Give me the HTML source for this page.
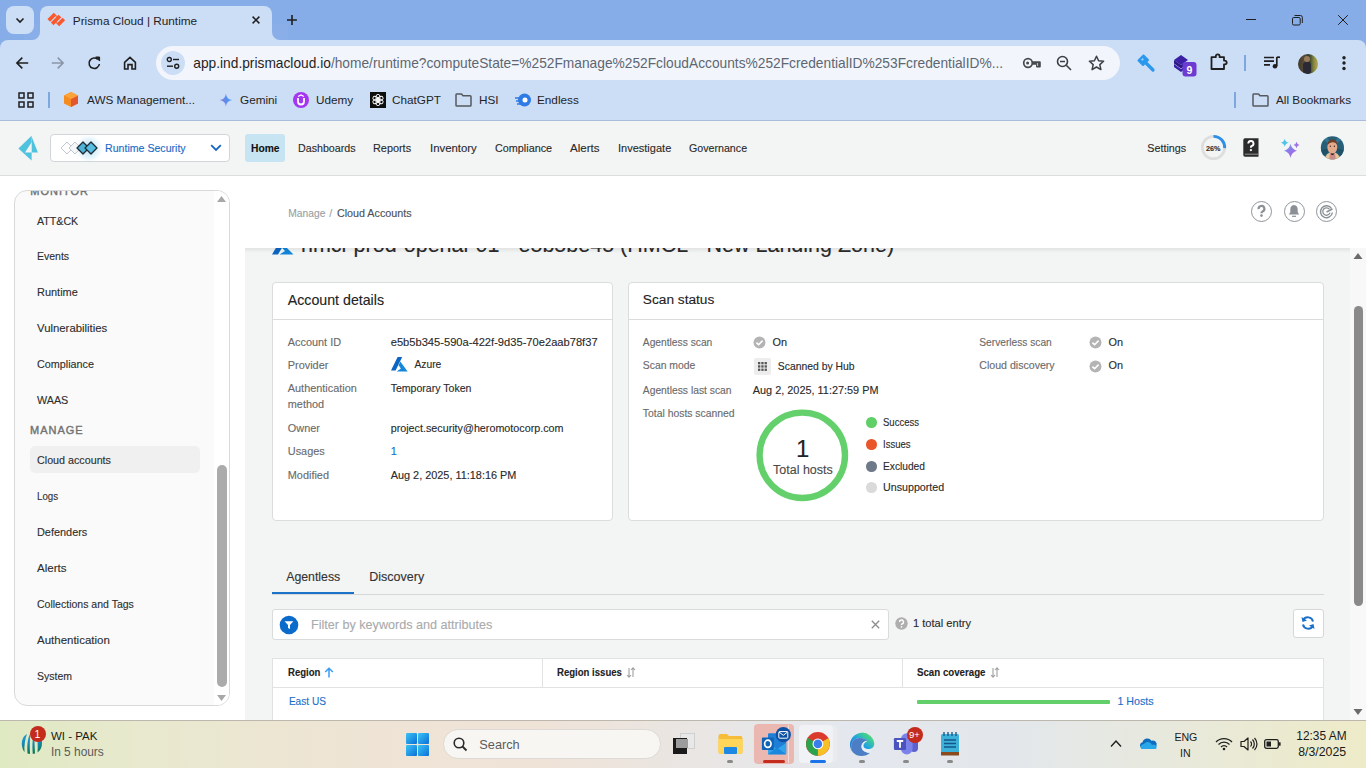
<!DOCTYPE html>
<html><head><meta charset="utf-8">
<style>
*{box-sizing:border-box;margin:0;padding:0}
html,body{width:1366px;height:768px;overflow:hidden}
body{position:relative;background:#fff;font-family:"Liberation Sans",sans-serif;color:#333}
.a{position:absolute}
.t{position:absolute;white-space:nowrap;line-height:1}
.app .t{-webkit-text-stroke:0.12px currentColor}
svg{position:absolute;overflow:visible}
#tabstrip{left:0;top:0;width:1366px;height:48px;background:#87ADE8}
#toolbar{left:0;top:40px;width:1366px;height:80px;background:#CCDDF6}
#sep120{left:0;top:120px;width:1366px;height:1px;background:#A9BCD9}
.ct{font-size:11.75px;color:#1F1F1F}
</style></head><body>
<!-- ============ CHROME ============ -->
<div id="tabstrip" class="a"></div>
<!-- active tab -->
<div class="a" style="left:40px;top:6px;width:232px;height:40px;border-radius:8px 8px 0 0;background:#CCDDF6"></div>
<div class="a" style="left:32px;top:32px;width:8px;height:8px;background:#CCDDF6"></div>
<div class="a" style="left:24px;top:24px;width:16px;height:16px;border-radius:0 0 8px 0;background:#89AEE8"></div>
<div class="a" style="left:272px;top:32px;width:8px;height:8px;background:#CCDDF6"></div>
<div class="a" style="left:272px;top:24px;width:16px;height:16px;border-radius:0 0 0 8px;background:#89AEE8"></div>
<div class="a" style="left:6px;top:6px;width:28px;height:28px;border-radius:8px;background:#CCDDF6"></div>
<svg style="left:14px;top:14px" width="12" height="12"><path d="M2.5 4.5 L6 8 L9.5 4.5" fill="none" stroke="#1F1F1F" stroke-width="1.6"/></svg>
<svg style="left:45px;top:10px" width="22" height="19" viewBox="45 10 22 19"><g transform="translate(56 20) rotate(-45)" fill="#FA582D"><rect x="-5.4" y="-6.7" width="9.0" height="3.7"/><rect x="2.4" y="-3.2" width="1.2" height="1.4"/><rect x="-5.4" y="-1.85" width="11" height="3.7"/><rect x="-2.2" y="1.8" width="1.2" height="1.4"/><rect x="-2.2" y="3.0" width="8.4" height="3.7"/></g></svg>
<div class="t ct" style="left:72.8px;top:16px;font-size:11.8px">Prisma Cloud | Runtime</div>
<svg style="left:251px;top:15px" width="10" height="10"><path d="M1.6 1.6 L8.4 8.4 M8.4 1.6 L1.6 8.4" stroke="#1F1F1F" stroke-width="1.5"/></svg>
<svg style="left:286px;top:14px" width="12" height="12"><path d="M6 1 V10.9 M1 6 H10.9" stroke="#1F1F1F" stroke-width="1.6"/></svg>
<!-- window controls -->
<div class="a" style="left:1246px;top:19px;width:10px;height:1px;background:#1F1F1F"></div>
<svg style="left:1290px;top:14px" width="14" height="13" viewBox="1290 14 14 13"><rect x="1292.5" y="17.5" width="7.7" height="7.5" rx="1.3" fill="none" stroke="#1F1F1F" stroke-width="1"/><path d="M1294.5 15.5 H1300.5 Q1302.3 15.5 1302.3 17.3 V23" fill="none" stroke="#1F1F1F" stroke-width="1"/></svg>
<svg style="left:1337px;top:14px" width="12" height="12" viewBox="1337 14 12 12"><path d="M1338.2 15.2 L1347.8 24.8 M1347.8 15.2 L1338.2 24.8" stroke="#1F1F1F" stroke-width="1"/></svg>

<div id="toolbar" class="a" style="border-radius:8px 8px 0 0"></div>
<!-- nav buttons -->
<svg style="left:14px;top:55px" width="16" height="16"><path d="M14.2 8 H3 M8.3 2.6 L2.9 8 L8.3 13.4" fill="none" stroke="#1F1F1F" stroke-width="1.6"/></svg>
<svg style="left:50px;top:55px" width="16" height="16"><path d="M1.8 8 H13 M7.7 2.6 L13.1 8 L7.7 13.4" fill="none" stroke="#8A96A8" stroke-width="1.6"/></svg>
<svg style="left:87px;top:56px" width="15" height="15"><path d="M12.4 8 A5.2 5.2 0 1 1 10.8 3.4" fill="none" stroke="#1F1F1F" stroke-width="1.6"/><path d="M8.6 1 H12.6 V5 Z" fill="#1F1F1F" stroke="#1F1F1F" stroke-width="1"/></svg>
<svg style="left:122px;top:55px" width="16" height="16"><path d="M2.6 7.4 L8 2.3 L13.4 7.4 V14 H10 V9.6 H6 V14 H2.6 Z" fill="none" stroke="#1F1F1F" stroke-width="1.6" stroke-linejoin="miter"/></svg>
<!-- omnibox -->
<div class="a" style="left:156px;top:46px;width:964px;height:34px;border-radius:17px;background:#F2F6FC"></div>
<div class="a" style="left:161px;top:51px;width:24px;height:24px;border-radius:12px;background:#CCDDF6"></div>
<svg style="left:166px;top:56px" width="14" height="14"><circle cx="3.3" cy="3.5" r="2" fill="none" stroke="#1F1F1F" stroke-width="1.4"/><path d="M7 3.5 H13" stroke="#1F1F1F" stroke-width="1.4"/><circle cx="10.7" cy="10.2" r="2" fill="none" stroke="#1F1F1F" stroke-width="1.4"/><path d="M1 10.2 H7" stroke="#1F1F1F" stroke-width="1.4"/></svg>
<div class="t" style="left:193.3px;top:57px;font-size:13.76px;color:#1F1F1F">app.ind.prismacloud.io<span style="color:#5E6672">/home/runtime?computeState=%252Fmanage%252FcloudAccounts%252FcredentialID%253FcredentialID%...</span></div>
<svg style="left:1022px;top:56px" width="20" height="14" viewBox="1022 56 20 14"><circle cx="1028" cy="63" r="4.3" fill="none" stroke="#474A4D" stroke-width="1.7"/><circle cx="1027.6" cy="63" r="1.5" fill="#474A4D"/><path d="M1032.2 61.2 H1039.8 Q1040.8 61.2 1040.8 62.2 V66.5 Q1040.8 67.5 1039.8 67.5 H1037 Q1036 67.5 1036 66.5 V64.8 H1032.2 Z" fill="#474A4D"/><path d="M1037.5 63 V66" stroke="#B8BABD" stroke-width="1.2"/></svg>
<svg style="left:1056px;top:55px" width="16" height="16"><circle cx="6.5" cy="6.5" r="5" fill="none" stroke="#3C4043" stroke-width="1.6"/><path d="M10.3 10.3 L15 15 M4 6.5 H9" stroke="#3C4043" stroke-width="1.6"/></svg>
<svg style="left:1088px;top:55px" width="17" height="16"><path d="M8.5 1.2 L10.6 5.8 L15.6 6.3 L11.8 9.6 L12.9 14.6 L8.5 12 L4.1 14.6 L5.2 9.6 L1.4 6.3 L6.4 5.8 Z" fill="none" stroke="#3C4043" stroke-width="1.5" stroke-linejoin="round"/></svg>
<!-- extensions -->
<svg style="left:1137px;top:54px" width="18" height="18" viewBox="0 0 18 18"><path d="M1.5 6.5 L6.5 1.5 L11 6 L6 11 Z" fill="#2B98EE" stroke="#2B98EE" stroke-width="2" stroke-linejoin="round"/><path d="M8.5 8.5 L16 16" stroke="#2B98EE" stroke-width="3.2" stroke-linecap="round"/><path d="M4.6 6.3 L6.3 4.6" stroke="#9ED3FA" stroke-width="1.6"/></svg>
<svg style="left:1173px;top:54px" width="25" height="24" viewBox="0 0 25 24"><path d="M1 6 L8 1 L15 6 L8 11 Z" fill="#3B20A6"/><path d="M1 9.5 L8 14.5 L10 13.1 V9.5 L8 11 L1 6 Z" fill="#2C168A"/><path d="M1 10 V13 L8 18 L10 16.6 V13.5 L8 15 Z" fill="#3B20A6"/><rect x="9.5" y="8" width="14" height="14.5" rx="3" fill="#6B3BD2"/><text x="16.5" y="19.6" font-family="Liberation Sans" font-weight="bold" font-size="10.5" fill="#fff" text-anchor="middle">9</text></svg>
<svg style="left:1210px;top:53px" width="19" height="18" viewBox="0 0 19 18"><path d="M1.5 4.2 H5.8 V3.3 A1.9 1.9 0 0 1 9.6 3.3 V4.2 H14 V7.6 H14.8 A1.9 1.9 0 0 1 14.8 11.4 H14 V16 H1.5 Z" fill="none" stroke="#1F1F1F" stroke-width="1.8" stroke-linejoin="round"/></svg>
<div class="a" style="left:1244px;top:55px;width:2px;height:16px;background:#7FA7DF"></div>
<svg style="left:1263px;top:56px" width="18" height="13" viewBox="0 0 18 13"><path d="M1 1.5 H11 M1 5.2 H11 M1 8.9 H7" stroke="#1F1F1F" stroke-width="1.7"/><path d="M13.8 1 V10" stroke="#1F1F1F" stroke-width="1.7"/><circle cx="12" cy="10.2" r="2.3" fill="#1F1F1F"/><path d="M13.8 1.2 H17" stroke="#1F1F1F" stroke-width="1.7"/></svg>
<div class="a" style="left:1298px;top:53.5px;width:20px;height:20px;border-radius:10px;overflow:hidden;background:linear-gradient(90deg,#3B3A2A 0%,#5A4B3A 30%,#2F3A30 55%,#8A8A40 80%,#B8A850 100%)"><div class="a" style="left:6px;top:2px;width:6px;height:6px;border-radius:50%;background:#9B7A5A"></div><div class="a" style="left:5px;top:8px;width:8px;height:12px;border-radius:3px;background:#2A2A35"></div></div>
<svg style="left:1341px;top:55px" width="6" height="16"><circle cx="3" cy="2.7" r="1.7" fill="#1F1F1F"/><circle cx="3" cy="8" r="1.7" fill="#1F1F1F"/><circle cx="3" cy="13.5" r="1.7" fill="#1F1F1F"/></svg>

<!-- bookmarks -->
<svg style="left:18px;top:92px" width="16" height="16"><g fill="none" stroke="#1F1F1F" stroke-width="1.5"><rect x="1" y="1" width="5" height="5"/><rect x="10" y="1" width="5" height="5"/><rect x="1" y="10" width="5" height="5"/><rect x="10" y="10" width="5" height="5"/></g></svg>
<div class="a" style="left:48px;top:92px;width:2px;height:16px;background:#7FA7DF"></div>
<svg style="left:63px;top:91px" width="16" height="17"><path d="M8 1 L15 4.5 V12.5 L8 16 L1 12.5 V4.5 Z" fill="#F68B1F"/><path d="M8 8 L15 4.5 V12.5 L8 16 Z" fill="#E4572E"/><path d="M1 4.5 L8 8 L15 4.5 L8 1 Z" fill="#FBA33A"/></svg>
<div class="t ct" style="left:87px;top:94px">AWS Management...</div>
<svg style="left:219px;top:93px" width="14" height="14" viewBox="219 93 14 14"><defs><linearGradient id="gem" x1="0" y1="0.6" x2="1" y2="0.4"><stop offset="0" stop-color="#9B72CB"/><stop offset="0.5" stop-color="#5B8DEF"/><stop offset="1" stop-color="#3FA1EE"/></linearGradient></defs><path d="M225.9 93.8 Q226.6 99.4 232.2 100.1 Q226.6 100.8 225.9 106.4 Q225.2 100.8 219.6 100.1 Q225.2 99.4 225.9 93.8 Z" fill="url(#gem)"/></svg>
<div class="t ct" style="left:240px;top:94px">Gemini</div>
<div class="a" style="left:293px;top:92px;width:16px;height:16px;border-radius:8px;background:#A435F0"></div>
<svg style="left:293px;top:92px" width="16" height="16"><path d="M5 6 V9.5 A3 3 0 0 0 11 9.5 V6" fill="none" stroke="#fff" stroke-width="1.8"/><path d="M5 4.5 L8 3 L11 4.5" fill="none" stroke="#fff" stroke-width="1.3"/></svg>
<div class="t ct" style="left:316px;top:94px">Udemy</div>
<div class="a" style="left:370px;top:92px;width:16px;height:16px;background:#0D0D0D"></div><svg style="left:370px;top:92px" width="16" height="16" viewBox="-8 -8 16 16"><rect x="-1.9" y="-5.6" width="3.8" height="6.6" rx="1.9" transform="rotate(0)" fill="none" stroke="#fff" stroke-width="0.9"/><rect x="-1.9" y="-5.6" width="3.8" height="6.6" rx="1.9" transform="rotate(60)" fill="none" stroke="#fff" stroke-width="0.9"/><rect x="-1.9" y="-5.6" width="3.8" height="6.6" rx="1.9" transform="rotate(120)" fill="none" stroke="#fff" stroke-width="0.9"/><rect x="-1.9" y="-5.6" width="3.8" height="6.6" rx="1.9" transform="rotate(180)" fill="none" stroke="#fff" stroke-width="0.9"/><rect x="-1.9" y="-5.6" width="3.8" height="6.6" rx="1.9" transform="rotate(240)" fill="none" stroke="#fff" stroke-width="0.9"/><rect x="-1.9" y="-5.6" width="3.8" height="6.6" rx="1.9" transform="rotate(300)" fill="none" stroke="#fff" stroke-width="0.9"/></svg>
<div class="t ct" style="left:392px;top:94px">ChatGPT</div>
<svg style="left:455px;top:92px" width="17" height="15"><path d="M1.5 2 Q1 2 1 2.8 V13.2 Q1 14 1.8 14 H15.2 Q16 14 16 13.2 V4.6 Q16 3.8 15.2 3.8 H8 L6.5 2 Z" fill="none" stroke="#55595E" stroke-width="1.5" stroke-linejoin="round"/></svg>
<div class="t ct" style="left:479px;top:94px">HSI</div>
<svg style="left:514px;top:92px" width="18" height="16"><circle cx="10.5" cy="8" r="6.5" fill="#2E7BE6"/><path d="M1 6 H7 M2 9 H6 M3 12 H7" stroke="#2E7BE6" stroke-width="1.3"/><circle cx="11" cy="8" r="2.5" fill="#fff"/></svg>
<div class="t ct" style="left:537px;top:94px">Endless</div>
<div class="a" style="left:1234px;top:92px;width:2px;height:16px;background:#7FA7DF"></div>
<svg style="left:1252px;top:92px" width="17" height="15"><path d="M1.5 2 Q1 2 1 2.8 V13.2 Q1 14 1.8 14 H15.2 Q16 14 16 13.2 V4.6 Q16 3.8 15.2 3.8 H8 L6.5 2 Z" fill="none" stroke="#55595E" stroke-width="1.5" stroke-linejoin="round"/></svg>
<div class="t ct" style="left:1276px;top:94px">All Bookmarks</div>
<div id="sep120" class="a"></div>

<div class="app">
<div class="a" style="left:0px;top:121px;width:1366px;height:55px;background:#F3F4F4;border-bottom:1px solid #DCDEDE"></div>
<svg style="left:18px;top:135px" width="21" height="26" viewBox="18 135 21 26"><path d="M18.4 148.5 L31.6 135.7 L31.6 160.6 Z" fill="#4FC3DE"/><path d="M31.6 136.5 L37.9 152.5 L31.6 152.5 Z" fill="#4FC3DE"/><path d="M25 152.5 L31.6 142.3 L31.6 152.5 Z" fill="#F3F4F4"/></svg>
<div class="a" style="left:50px;top:134px;width:180px;height:28px;background:#fff;border:1px solid #D3D6D8;border-radius:4px"></div>
<div class="a" style="left:75px;top:135px;width:28px;height:27px;background:radial-gradient(circle, rgba(110,195,235,0.5) 0%, rgba(120,200,235,0.2) 45%, rgba(255,255,255,0) 70%);"></div>
<svg style="left:60px;top:141px" width="40" height="14" viewBox="60 141 40 14"><path d="M67 142 L73 148 L67 154 L61 148 Z" fill="none" stroke="#C3C8D0" stroke-width="1"/><path d="M75 142 L81 148 L75 154 L69 148 Z" fill="#F4F6F8" stroke="#C3C8D0" stroke-width="1"/><path d="M83 142 L89 148 L83 154 L77 148 Z" fill="#4DB3D9" stroke="#1E2A33" stroke-width="1.3" stroke-linejoin="round"/><path d="M91 142 L97 148 L91 154 L85 148 Z" fill="#56BDE3" stroke="#1E2A33" stroke-width="1.3" stroke-linejoin="round"/></svg>
<div class="t" style="left:105px;top:143px;font-size:10.6px;color:#1A6BC7">Runtime Security</div>
<svg style="left:210px;top:144px" width="12" height="8"><path d="M1.2 1.2 L6 6 L10.8 1.2" fill="none" stroke="#1565C0" stroke-width="1.8"/></svg>
<div class="a" style="left:245px;top:134px;width:40px;height:28px;background:#C7E4F2;border-radius:3px"></div>
<div class="t" style="left:250.5px;top:143px;font-size:11.2px;color:#111;transform:scaleX(0.9170);transform-origin:0 0;font-weight:700">Home</div>
<div class="t" style="left:297.5px;top:143px;font-size:11px;color:#2A2A2A;transform:scaleX(0.9706);transform-origin:0 0">Dashboards</div>
<div class="t" style="left:373.2px;top:143px;font-size:11px;color:#2A2A2A;transform:scaleX(0.9888);transform-origin:0 0">Reports</div>
<div class="t" style="left:429.8px;top:143px;font-size:11px;color:#2A2A2A;transform:scaleX(1.0335);transform-origin:0 0">Inventory</div>
<div class="t" style="left:494.8px;top:143px;font-size:11px;color:#2A2A2A;transform:scaleX(0.9829);transform-origin:0 0">Compliance</div>
<div class="t" style="left:569.9px;top:143px;font-size:11px;color:#2A2A2A;transform:scaleX(1.0489);transform-origin:0 0">Alerts</div>
<div class="t" style="left:617.5px;top:143px;font-size:11px;color:#2A2A2A;transform:scaleX(1.0009);transform-origin:0 0">Investigate</div>
<div class="t" style="left:688.9px;top:143px;font-size:11px;color:#2A2A2A;transform:scaleX(0.9688);transform-origin:0 0">Governance</div>
<div class="t" style="left:1147.3px;top:143px;font-size:10.75px;color:#2A2A2A">Settings</div>
<svg style="left:1200px;top:134px" width="27" height="27" viewBox="0 0 27 27"><circle cx="13.5" cy="13.5" r="11.2" fill="none" stroke="#DEDEDE" stroke-width="2.8"/><path d="M13.5 2.3 A11.2 11.2 0 0 1 24.68 14.2" fill="none" stroke="#2C8FE8" stroke-width="2.8"/></svg>
<div class="t" style="left:1206.2px;top:145px;font-size:7.4px;color:#333;transform:scaleX(0.9799);transform-origin:0 0;font-weight:700">26%</div>
<svg style="left:1243px;top:138px" width="16" height="20" viewBox="0 0 16 20"><path d="M0.3 2 Q0.3 0.3 2 0.3 H15.5 V18.8 H2 Q0.3 18.8 0.3 17 Z" fill="#2B2B2B"/><path d="M1.8 16.2 H15" stroke="#A0A0A0" stroke-width="0.9"/><path d="M5.3 5.6 A2.6 2.6 0 1 1 8.4 8.1 Q7.9 8.5 7.9 9.8" fill="none" stroke="#fff" stroke-width="1.9"/><circle cx="7.9" cy="12.1" r="1.15" fill="#fff"/></svg>
<svg style="left:1278px;top:136px" width="24" height="24" viewBox="1278 136 24 24"><defs><linearGradient id="sg" x1="0" y1="0" x2="0.6" y2="1"><stop offset="0" stop-color="#6FB6F2"/><stop offset="0.5" stop-color="#8A7BEA"/><stop offset="1" stop-color="#A867DE"/></linearGradient></defs><path d="M1290.5 143.7 Q1291.652 149.44 1296.9 150.7 Q1291.652 151.95999999999998 1290.5 157.7 Q1289.348 151.95999999999998 1284.1 150.7 Q1289.348 149.44 1290.5 143.7 Z" fill="url(#sg)"/><path d="M1284.7 138.7 Q1285.42 141.98 1288.7 142.7 Q1285.42 143.42 1284.7 146.7 Q1283.98 143.42 1280.7 142.7 Q1283.98 141.98 1284.7 138.7 Z" fill="#4EC3EC"/><path d="M1296.5 141.7 Q1297.04 144.406 1299.5 145 Q1297.04 145.594 1296.5 148.3 Q1295.96 145.594 1293.5 145 Q1295.96 144.406 1296.5 141.7 Z" fill="#A070E6"/></svg>
<svg style="left:1320px;top:135px" width="25" height="26" viewBox="1320 135 25 26"><defs><clipPath id="avc"><circle cx="1332.4" cy="147.8" r="11.6"/></clipPath></defs><g clip-path="url(#avc)"><rect x="1320" y="135" width="25" height="26" fill="#255F78"/><path d="M1332.4 147.8 L1322 138 L1327 136 Z M1332.4 147.8 L1343 138 L1338 136 Z" fill="#3A86A6" opacity="0.6"/><path d="M1320 150 L1332.4 147.8 L1322 158 Z M1345 150 L1332.4 147.8 L1343 158 Z" fill="#1B4A60" opacity="0.7"/><path d="M1324.5 161 Q1325 152.5 1332.4 152 Q1339.8 152.5 1340.3 161 Z" fill="#E8C49A"/><path d="M1329 161 L1330 153 H1335 L1336 161 Z" fill="#C98A86"/><ellipse cx="1332.3" cy="147.2" rx="4.9" ry="6.6" fill="#E2A98A"/><path d="M1327.5 145 Q1327.5 139.5 1332.5 139.5 Q1337.3 139.5 1337.2 144.5 Q1335 141.8 1332 142.3 Q1329 142.8 1327.5 145 Z" fill="#6B3F2A"/><path d="M1330.5 153.5 Q1332.4 156.5 1334.3 153.5 Z" fill="#1E1A1A"/><circle cx="1330.3" cy="146.3" r="0.7" fill="#4A2A25"/><circle cx="1334.4" cy="146.3" r="0.7" fill="#4A2A25"/></g></svg>
<div class="a" style="left:14px;top:190px;width:216px;height:516px;background:#FAFAFA;border:1px solid #D9D9D9;border-radius:13px;overflow:hidden"></div>
<div class="a" style="left:214px;top:191px;width:15px;height:514px;background:#FFFFFF;border-radius:0 12px 12px 0"></div>
<div class="a" style="left:15px;top:191px;width:199px;height:514px;overflow:hidden">
<div class="t" style="left:15.3px;top:-5px;font-size:11px;color:#727272;letter-spacing:1.0px;-webkit-text-stroke:0.4px #727272">MONITOR</div>
<div class="a" style="left:15px;top:255px;width:170px;height:27px;background:#F0F0F0;border-radius:5px"></div>
<div class="t" style="left:22px;top:25px;font-size:11px;color:#2E2E2E;transform:scaleX(0.9673);transform-origin:0 0">ATT&amp;CK</div>
<div class="t" style="left:22px;top:60px;font-size:11px;color:#2E2E2E;transform:scaleX(0.9538);transform-origin:0 0">Events</div>
<div class="t" style="left:22px;top:96px;font-size:11px;color:#2E2E2E;transform:scaleX(0.9959);transform-origin:0 0">Runtime</div>
<div class="t" style="left:22px;top:132px;font-size:11px;color:#2E2E2E;transform:scaleX(1.0324);transform-origin:0 0">Vulnerabilities</div>
<div class="t" style="left:22px;top:168px;font-size:11px;color:#2E2E2E;transform:scaleX(0.9795);transform-origin:0 0">Compliance</div>
<div class="t" style="left:22px;top:204px;font-size:11px;color:#2E2E2E;transform:scaleX(0.9781);transform-origin:0 0">WAAS</div>
<div class="t" style="left:15px;top:234px;font-size:11px;color:#727272;letter-spacing:1.0px;-webkit-text-stroke:0.4px #727272">MANAGE</div>
<div class="t" style="left:22px;top:264px;font-size:11px;color:#2E2E2E;transform:scaleX(0.9753);transform-origin:0 0">Cloud accounts</div>
<div class="t" style="left:22px;top:300px;font-size:11px;color:#2E2E2E;transform:scaleX(0.8838);transform-origin:0 0">Logs</div>
<div class="t" style="left:22px;top:336px;font-size:11px;color:#2E2E2E;transform:scaleX(0.9905);transform-origin:0 0">Defenders</div>
<div class="t" style="left:22px;top:372px;font-size:11px;color:#2E2E2E;transform:scaleX(1.0489);transform-origin:0 0">Alerts</div>
<div class="t" style="left:22px;top:408px;font-size:11px;color:#2E2E2E;transform:scaleX(0.9560);transform-origin:0 0">Collections and Tags</div>
<div class="t" style="left:22px;top:444px;font-size:11px;color:#2E2E2E;transform:scaleX(1.0447);transform-origin:0 0">Authentication</div>
<div class="t" style="left:22px;top:480px;font-size:11px;color:#2E2E2E;transform:scaleX(0.9540);transform-origin:0 0">System</div>
</div>
<svg style="left:216px;top:195px" width="12" height="8"><path d="M1 7 L5.5 1 L10 7 Z" fill="#A8A8A8"/></svg>
<svg style="left:216px;top:694px" width="12" height="8"><path d="M1 1 L5.5 7 L10 1 Z" fill="#A8A8A8"/></svg>
<div class="a" style="left:217px;top:465px;width:10px;height:222px;background:#ABABAB;border-radius:5px"></div>
<div class="a" style="left:245px;top:248px;width:1105px;height:472px;background:#F3F4F4;"></div>
<div class="a" style="left:245px;top:248px;width:1105px;height:20px;overflow:hidden">
<div class="t" style="left:56px;top:-13px;font-size:21.5px;color:#2A2A2A">hmcl-prod-openai-01 - e5b5be45 (HMCL - New Landing Zone)</div>
<svg style="left:27px;top:-8px" width="22" height="16" viewBox="0 0 22 16"><path d="M8.5 0 L14.5 0 L6 14.5 L0 14.5 Z" fill="#0A66C2"/><path d="M12 5 L21.5 14.5 L7.5 14.5 L13 11 L10 7.8 Z" fill="#1185D8"/></svg>
</div>
<div class="a" style="left:245px;top:248px;width:1105px;height:5px;background:linear-gradient(rgba(0,0,0,0.07),rgba(0,0,0,0));"></div>
<div class="t" style="left:288.3px;top:209px;font-size:10.25px;color:#9A9FA4">Manage</div>
<div class="t" style="left:329.3px;top:208px;font-size:10.75px;color:#9A9FA4">/</div>
<div class="t" style="left:336.9px;top:208px;font-size:10.75px;color:#4A4F55">Cloud Accounts</div>
<div class="a" style="left:1251.0px;top:200.5px;width:21px;height:21px;background:transparent;border:1.2px solid #8F959A;border-radius:50%"></div>
<div class="a" style="left:1283.5px;top:200.5px;width:21px;height:21px;background:transparent;border:1.2px solid #8F959A;border-radius:50%"></div>
<div class="a" style="left:1316.0px;top:200.5px;width:21px;height:21px;background:transparent;border:1.2px solid #8F959A;border-radius:50%"></div>
<svg style="left:1256px;top:205px" width="11" height="12" viewBox="0 0 11 12"><path d="M2.6 4.2 A2.9 2.9 0 1 1 6.4 6.6 Q5.5 7.1 5.5 8.3" fill="none" stroke="#8A9096" stroke-width="2.2"/><circle cx="5.5" cy="10.6" r="1.3" fill="#8A9096"/></svg>
<svg style="left:1288px;top:204px" width="12" height="14" viewBox="0 0 12 14"><path d="M6 1 C3.3 1 2.3 3.2 2.3 5.5 V8.3 L0.8 10.6 H11.2 L9.7 8.3 V5.5 C9.7 3.2 8.7 1 6 1 Z" fill="#8A9096"/><path d="M4 12.3 H8" stroke="#8A9096" stroke-width="1.2"/></svg>
<svg style="left:1319px;top:203.5px" width="15" height="15" viewBox="0 0 15 15"><path d="M12.6 4.6 A6 6 0 1 0 13.4 8.5" fill="none" stroke="#8A9096" stroke-width="1.4"/><path d="M10.5 5.4 A3.7 3.7 0 1 0 11 8.6" fill="none" stroke="#8A9096" stroke-width="1.3"/><path d="M7.5 8 L13.5 5" stroke="#8A9096" stroke-width="1.4"/></svg>
<div class="a" style="left:1350px;top:248px;width:16px;height:472px;background:#F8F8F8;"></div>
<svg style="left:1353px;top:252px" width="11" height="8"><path d="M0.5 7 L5 1 L9.5 7 Z" fill="#6B6B6B"/></svg>
<svg style="left:1353px;top:708px" width="11" height="8"><path d="M0.5 1 L5 7 L9.5 1 Z" fill="#6B6B6B"/></svg>
<div class="a" style="left:1354px;top:306px;width:9px;height:300px;background:#8A8A8A;border-radius:4.5px"></div>
<div class="a" style="left:272px;top:282px;width:341px;height:239px;background:#fff;border:1px solid #DADCDD;border-radius:4px"></div>
<div class="a" style="left:273px;top:319px;width:339px;height:1px;background:#DADCDD;"></div>
<div class="t" style="left:287.8px;top:293px;font-size:14.2px;color:#222">Account details</div>
<div class="t" style="left:287.8px;top:337px;font-size:10.9px;color:#6A6A6A">Account ID</div>
<div class="t" style="left:287.8px;top:360px;font-size:10.9px;color:#6A6A6A">Provider</div>
<div class="t" style="left:287.8px;top:383px;font-size:10.9px;color:#6A6A6A">Authentication</div>
<div class="t" style="left:287.8px;top:399px;font-size:10.9px;color:#6A6A6A">method</div>
<div class="t" style="left:287.8px;top:423px;font-size:10.9px;color:#6A6A6A">Owner</div>
<div class="t" style="left:287.8px;top:446px;font-size:10.9px;color:#6A6A6A">Usages</div>
<div class="t" style="left:287.8px;top:470px;font-size:10.9px;color:#6A6A6A">Modified</div>
<div class="t" style="left:390.7px;top:337px;font-size:11.15px;color:#2A2A2A">e5b5b345-590a-422f-9d35-70e2aab78f37</div>
<svg style="left:391px;top:357px" width="17" height="15" viewBox="0 0 17 15"><path d="M6.6 0 L11.2 0 L4.6 13.4 L0 13.4 Z" fill="#0A66C2"/><path d="M9.3 4.6 L16.6 14.5 L5.6 14.5 L9.9 11.4 L7.6 8.2 Z" fill="#1487DB"/></svg>
<div class="t" style="left:414.4px;top:360px;font-size:10.3px;color:#2A2A2A">Azure</div>
<div class="t" style="left:390.7px;top:383px;font-size:10.55px;color:#2A2A2A">Temporary Token</div>
<div class="t" style="left:390.7px;top:423px;font-size:10.75px;color:#2A2A2A">project.security@heromotocorp.com</div>
<div class="t" style="left:390.7px;top:446px;font-size:10.9px;color:#1A6FC9">1</div>
<div class="t" style="left:390.7px;top:470px;font-size:10.9px;color:#2A2A2A">Aug 2, 2025, 11:18:16 PM</div>
<div class="a" style="left:628px;top:282px;width:696px;height:239px;background:#fff;border:1px solid #DADCDD;border-radius:4px"></div>
<div class="a" style="left:629px;top:319px;width:694px;height:1px;background:#DADCDD;"></div>
<div class="t" style="left:642.8px;top:293px;font-size:13.7px;color:#222">Scan status</div>
<div class="t" style="left:642.8px;top:338px;font-size:10.25px;color:#6A6A6A">Agentless scan</div>
<div class="t" style="left:642.8px;top:361px;font-size:10.4px;color:#6A6A6A">Scan mode</div>
<div class="t" style="left:642.8px;top:386px;font-size:10.3px;color:#6A6A6A">Agentless last scan</div>
<div class="t" style="left:642.8px;top:409px;font-size:10.4px;color:#6A6A6A">Total hosts scanned</div>
<svg style="left:752.5px;top:335.5px" width="13" height="13" viewBox="0 0 13 13"><circle cx="6.5" cy="6.5" r="6" fill="#B4B4B4"/><path d="M3.4 6.6 L5.6 8.7 L9.6 4.6" fill="none" stroke="#fff" stroke-width="1.6"/></svg>
<div class="t" style="left:772.5px;top:337px;font-size:10.9px;color:#2A2A2A">On</div>
<div class="a" style="left:754px;top:358px;width:17px;height:17px;background:#EDEDED;border-radius:2px"></div>
<svg style="left:757px;top:361px" width="11" height="11"><rect x="1.0" y="1.0" width="2.3" height="2.3" fill="#555"/><rect x="1.0" y="4.3" width="2.3" height="2.3" fill="#555"/><rect x="1.0" y="7.6" width="2.3" height="2.3" fill="#555"/><rect x="4.3" y="1.0" width="2.3" height="2.3" fill="#555"/><rect x="4.3" y="4.3" width="2.3" height="2.3" fill="#555"/><rect x="4.3" y="7.6" width="2.3" height="2.3" fill="#555"/><rect x="7.6" y="1.0" width="2.3" height="2.3" fill="#555"/><rect x="7.6" y="4.3" width="2.3" height="2.3" fill="#555"/><rect x="7.6" y="7.6" width="2.3" height="2.3" fill="#555"/></svg>
<div class="t" style="left:777.8px;top:362px;font-size:10.4px;color:#2A2A2A">Scanned by Hub</div>
<div class="t" style="left:752.8px;top:385px;font-size:10.9px;color:#2A2A2A">Aug 2, 2025, 11:27:59 PM</div>
<svg style="left:755px;top:407px" width="96" height="96" viewBox="755 407 96 96"><circle cx="802.3" cy="455.3" r="42.7" fill="none" stroke="#64D06C" stroke-width="6.4"/></svg>
<div class="t" style="left:796px;top:437px;font-size:24px;color:#222;font-weight:300;font-weight:300">1</div>
<div class="t" style="left:773px;top:464px;font-size:12.5px;color:#4A4A4A">Total hosts</div>
<div class="a" style="left:866.2px;top:417.05px;width:10.5px;height:10.5px;border-radius:50%;background:#5FCF68"></div>
<div class="t" style="left:882.8px;top:417px;font-size:10.6px;color:#2A2A2A;transform:scaleX(0.8993);transform-origin:0 0">Success</div>
<div class="a" style="left:866.2px;top:439.05px;width:10.5px;height:10.5px;border-radius:50%;background:#E8562A"></div>
<div class="t" style="left:882.8px;top:439px;font-size:10.6px;color:#2A2A2A;transform:scaleX(0.8984);transform-origin:0 0">Issues</div>
<div class="a" style="left:866.2px;top:461.25px;width:10.5px;height:10.5px;border-radius:50%;background:#6E7A8A"></div>
<div class="t" style="left:882.8px;top:461px;font-size:10.6px;color:#2A2A2A;transform:scaleX(0.9615);transform-origin:0 0">Excluded</div>
<div class="a" style="left:866.2px;top:482.15px;width:10.5px;height:10.5px;border-radius:50%;background:#DADADA"></div>
<div class="t" style="left:882.8px;top:482px;font-size:10.6px;color:#2A2A2A;transform:scaleX(1.0090);transform-origin:0 0">Unsupported</div>
<div class="t" style="left:979.3px;top:338px;font-size:10.2px;color:#6A6A6A">Serverless scan</div>
<div class="t" style="left:979.3px;top:360px;font-size:10.6px;color:#6A6A6A">Cloud discovery</div>
<svg style="left:1088.7px;top:336.0px" width="13" height="13" viewBox="0 0 13 13"><circle cx="6.5" cy="6.5" r="6" fill="#B4B4B4"/><path d="M3.4 6.6 L5.6 8.7 L9.6 4.6" fill="none" stroke="#fff" stroke-width="1.6"/></svg>
<svg style="left:1088.7px;top:359.8px" width="13" height="13" viewBox="0 0 13 13"><circle cx="6.5" cy="6.5" r="6" fill="#B4B4B4"/><path d="M3.4 6.6 L5.6 8.7 L9.6 4.6" fill="none" stroke="#fff" stroke-width="1.6"/></svg>
<div class="t" style="left:1108.6px;top:337px;font-size:10.9px;color:#2A2A2A">On</div>
<div class="t" style="left:1108.6px;top:360px;font-size:10.9px;color:#2A2A2A">On</div>
<div class="a" style="left:272px;top:594px;width:1052px;height:1px;background:#D5D7D8;"></div>
<div class="a" style="left:272px;top:592px;width:82px;height:2px;background:#1A73C8;"></div>
<div class="t" style="left:286.2px;top:571px;font-size:12.3px;color:#333">Agentless</div>
<div class="t" style="left:369.3px;top:571px;font-size:12.5px;color:#333">Discovery</div>
<div class="a" style="left:272px;top:609px;width:617px;height:31px;background:#fff;border:1px solid #D9DBDC;border-radius:3px"></div>
<svg style="left:279px;top:615px" width="20" height="20" viewBox="0 0 20 20"><circle cx="10" cy="10" r="9.3" fill="#0B6BCB"/><path d="M5.6 6.2 H14.4 L11 10 V14 L9 13 V10 Z" fill="#fff"/></svg>
<div class="t" style="left:311px;top:619px;font-size:12.6px;color:#A9ABAD">Filter by keywords and attributes</div>
<svg style="left:870.5px;top:620px" width="9" height="9"><path d="M0.8 0.8 L8.2 8.2 M8.2 0.8 L0.8 8.2" stroke="#8C8C8C" stroke-width="1.3"/></svg>
<svg style="left:894.5px;top:617px" width="13" height="13" viewBox="0 0 13 13"><circle cx="6.5" cy="6.5" r="6.2" fill="#AEAEAE"/><path d="M4.5 5 A2 2 0 1 1 7 6.9 Q6.5 7.2 6.5 8" fill="none" stroke="#fff" stroke-width="1.4"/><circle cx="6.5" cy="9.9" r="0.8" fill="#fff"/></svg>
<div class="t" style="left:913px;top:618px;font-size:11.1px;color:#2A2A2A">1 total entry</div>
<div class="a" style="left:1293px;top:609px;width:31px;height:29px;background:#fff;border:1px solid #D5D7D8;border-radius:3px"></div>
<svg style="left:1300px;top:615px" width="16" height="16" viewBox="0 0 16 16"><path d="M13 6.5 A5.3 5.3 0 0 0 3.2 5" fill="none" stroke="#1A6FC9" stroke-width="2"/><path d="M3 9.5 A5.3 5.3 0 0 0 12.8 11" fill="none" stroke="#1A6FC9" stroke-width="2"/><path d="M1.5 2 L2.5 7 L7 5.5 Z" fill="#1A6FC9"/><path d="M14.5 14 L13.5 9 L9 10.5 Z" fill="#1A6FC9"/></svg>
<div class="a" style="left:272px;top:658px;width:1052px;height:62px;background:#fff;border:1px solid #E0E2E3;border-bottom:none"></div>
<div class="a" style="left:273px;top:687px;width:1050px;height:1px;background:#E0E2E3;"></div>
<div class="a" style="left:542px;top:659px;width:1px;height:28px;background:#E0E2E3;"></div>
<div class="a" style="left:902px;top:659px;width:1px;height:28px;background:#E0E2E3;"></div>
<div class="t" style="left:287.9px;top:667px;font-size:10.6px;color:#222;transform:scaleX(0.9000);transform-origin:0 0;font-weight:700">Region</div>
<svg style="left:324px;top:667px" width="10" height="11"><path d="M5 10.5 V1.5 M1.2 5 L5 1.2 L8.8 5" fill="none" stroke="#3A9CF5" stroke-width="1.5"/></svg>
<div class="t" style="left:557.4px;top:667px;font-size:10.6px;color:#222;transform:scaleX(0.9039);transform-origin:0 0;font-weight:700">Region issues</div>
<svg style="left:625.5px;top:667px" width="10" height="11"><path d="M3 1 V10 M1 8 L3 10.2 L5 8" fill="none" stroke="#A0A0A0" stroke-width="1.1"/><path d="M7 10 V1 M5 3 L7 0.8 L9 3" fill="none" stroke="#A0A0A0" stroke-width="1.1"/></svg>
<div class="t" style="left:917.4px;top:667px;font-size:10.6px;color:#222;transform:scaleX(0.9162);transform-origin:0 0;font-weight:700">Scan coverage</div>
<svg style="left:989.5px;top:667px" width="10" height="11"><path d="M3 1 V10 M1 8 L3 10.2 L5 8" fill="none" stroke="#A0A0A0" stroke-width="1.1"/><path d="M7 10 V1 M5 3 L7 0.8 L9 3" fill="none" stroke="#A0A0A0" stroke-width="1.1"/></svg>
<div class="t" style="left:288.9px;top:697px;font-size:10.1px;color:#1A6FC9">East US</div>
<div class="a" style="left:917px;top:700px;width:193px;height:3.5px;background:#62CF6B;border-radius:1px"></div>
<div class="t" style="left:1117.4px;top:696px;font-size:10.7px;color:#1A6FC9">1 Hosts</div>
</div>
<div class="a" style="left:0px;top:720px;width:1366px;height:48px;background:linear-gradient(90deg,#DFE9C2 0%,#E8E9CE 10%,#EEE4D4 25%,#EFE3D8 40%,#E9E6E4 52%,#E4E8EE 62%,#E3E7EB 74%,#E8E9DC 86%,#EBEAD0 94%,#EDEBC8 100%);border-top:1px solid #BDB8AE"></div>
<!-- ============ TASKBAR ============ -->
<svg style="left:20px;top:731px" width="24" height="24" viewBox="0 0 24 24"><defs><linearGradient id="crk" x1="0" y1="0" x2="0.3" y2="1"><stop offset="0" stop-color="#22A7E8"/><stop offset="0.55" stop-color="#1788B8"/><stop offset="1" stop-color="#0C7A52"/></linearGradient></defs>
<path d="M7 3 C3 5 1.2 10 2 15 C2.5 18 3.5 20 4.5 21 C4 15 5 8 7 3 Z" fill="url(#crk)"/>
<path d="M10.5 2.2 C8 6 6.8 13 7.5 22.5 L10 23 C9.5 15 9.8 8 10.5 2.2 Z" fill="url(#crk)"/>
<path d="M14 2 C12.5 7 12 15 12.8 23 L15 22.5 C14.5 15 14.5 8 14 2 Z" fill="url(#crk)"/>
<path d="M17 3 C17.5 8 18 15 17.5 21.5 C20.5 19.5 22 16 22 12 C22 8 20 4.5 17 3 Z" fill="url(#crk)"/>
</svg>
<div class="a" style="left:30px;top:726px;width:16px;height:16px;border-radius:50%;background:#C42B1C"></div>
<div class="t" style="left:34.5px;top:728.5px;font-size:10.5px;color:#fff">1</div>
<div class="t" style="left:50.9px;top:731px;font-size:11.5px;color:#1A1A1A">WI - PAK</div>
<div class="t" style="left:50.9px;top:747px;font-size:11.9px;color:#5A5A5A">In 5 hours</div>
<!-- windows logo -->
<svg style="left:406px;top:733px" width="23" height="23" viewBox="0 0 23 23"><defs><linearGradient id="win" x1="0" y1="0" x2="1" y2="1"><stop offset="0" stop-color="#3CC4F5"/><stop offset="1" stop-color="#0A6FD8"/></linearGradient></defs>
<rect x="0" y="0" width="11" height="11" rx="1" fill="url(#win)"/><rect x="12" y="0" width="11" height="11" rx="1" fill="url(#win)"/><rect x="0" y="12" width="11" height="11" rx="1" fill="url(#win)"/><rect x="12" y="12" width="11" height="11" rx="1" fill="url(#win)"/></svg>
<!-- search -->
<div class="a" style="left:443px;top:729px;width:218px;height:30px;border-radius:15px;background:#F8F6F3;border:1px solid #DDD9D4"></div>
<svg style="left:453px;top:737px" width="15" height="15"><circle cx="6" cy="6" r="4.8" fill="none" stroke="#2A2A2A" stroke-width="1.6"/><path d="M9.5 9.5 L13.5 13.5" stroke="#2A2A2A" stroke-width="1.8"/></svg>
<div class="t" style="left:479.3px;top:739px;font-size:12.75px;color:#5C5C5C">Search</div>
<!-- task view -->
<div class="a" style="left:680px;top:733px;width:15px;height:16px;background:#E8E8E8;border:1px solid #CFCFCF"></div>
<div class="a" style="left:673px;top:738px;width:14px;height:16px;background:#1A1A1A"></div>
<div class="a" style="left:676px;top:739px;width:12px;height:9px;background:#9C9C9C"></div>
<!-- file explorer -->
<svg style="left:718px;top:733px" width="25" height="22" viewBox="0 0 25 22"><path d="M0.5 3 Q0.5 1 2.5 1 H9 L11 3 H22.5 Q24.5 3 24.5 5 V19 Q24.5 21 22.5 21 H2.5 Q0.5 21 0.5 19 Z" fill="#F5BD3A"/><path d="M0.5 6 H24.5 V19 Q24.5 21 22.5 21 H2.5 Q0.5 21 0.5 19 Z" fill="#FFD55A"/><rect x="6" y="14" width="13" height="7" rx="1" fill="#1E88E5"/></svg>
<div class="a" style="left:727px;top:760px;width:6px;height:3px;border-radius:2px;background:#8A8A8A"></div>
<!-- outlook highlighted -->
<div class="a" style="left:754.3px;top:724px;width:39.5px;height:40px;border-radius:4px;background:#EBB7B1"></div>
<div class="a" style="left:787.6px;top:725px;width:1px;height:38px;background:#F4DCD9"></div>
<svg style="left:761px;top:726px" width="30" height="30" viewBox="761 726 30 30"><rect x="768" y="733.3" width="18.2" height="21" rx="1.2" fill="#1F7FD6"/><path d="M768 743 L777 749 L786.2 743 V754.3 H768 Z" fill="#33A4EC"/><path d="M768 754.3 L777 747.5 L786.2 754.3 Z" fill="#1B88DE"/><rect x="761.9" y="737.6" width="11.9" height="12.4" rx="1" fill="#0F64B8"/><ellipse cx="767.85" cy="743.8" rx="3.2" ry="3.6" fill="none" stroke="#fff" stroke-width="1.7"/>
<circle cx="783.3" cy="734.7" r="7.6" fill="#0D52A3"/><rect x="778.8" y="731.6" width="9" height="6.6" rx="0.8" fill="none" stroke="#fff" stroke-width="1"/><path d="M779 732 L783.3 735.3 L787.6 732" fill="none" stroke="#fff" stroke-width="1"/></svg>
<div class="a" style="left:763.3px;top:760.2px;width:21.4px;height:2.8px;border-radius:2px;background:#C42B1C"></div>
<!-- chrome -->
<div class="a" style="left:799px;top:725.2px;width:34px;height:37.6px;border-radius:4px;background:#F1F2F5"></div>
<div class="a" style="left:833px;top:726px;width:3.6px;height:36px;border-radius:0 4px 4px 0;background:#E9EBEF"></div>
<svg style="left:805.9px;top:731.9px" width="23.8" height="23.8" viewBox="805.9 731.9 23.8 23.8"><circle cx="817.8" cy="743.8" r="11.9" fill="#DB3B2D"/>
<path d="M817.8 743.8 L828.1 737.85 A11.9 11.9 0 0 1 817.8 755.7 Z" fill="#F6C026"/>
<path d="M817.8 743.8 L817.8 755.7 A11.9 11.9 0 0 1 807.5 737.85 Z" fill="#2BA24C"/>
<path d="M817.8 743.8 L823 740.8 L828.1 737.85 L817.8 737.85 Z" fill="#DB3B2D"/>
<path d="M817.8 743.8 L812.6 746.8 L807.5 737.85 Z" fill="#2BA24C"/>
<path d="M817.8 743.8 L822.9 746.8 L817.8 755.7 Z" fill="#F6C026"/>
<circle cx="817.8" cy="743.8" r="5.4" fill="#fff"/><circle cx="817.8" cy="743.8" r="4.3" fill="#3A7EEC"/></svg>
<div class="a" style="left:810px;top:760.2px;width:16px;height:2.8px;border-radius:2px;background:#1A73E8"></div>
<!-- edge -->
<svg style="left:849px;top:731px" width="27" height="27" viewBox="849 731 27 27"><defs><linearGradient id="edg" x1="0.1" y1="0.9" x2="0.9" y2="0.1"><stop offset="0" stop-color="#1A6FC8"/><stop offset="0.45" stop-color="#1FA0E4"/><stop offset="0.8" stop-color="#3DCB9A"/><stop offset="1" stop-color="#62DA62"/></linearGradient></defs>
<path d="M850 744 A12.2 12.2 0 0 1 874.3 743.5 C874.3 747.5 871 749.3 867.5 749 C864 748.7 862 747 863 744.3 C863.8 742 866.5 741.5 867 741 C865 738 858 736.5 853.5 740.5 C850.5 743.5 850.5 749 853 752.5 A12.2 12.2 0 0 1 850 744 Z" fill="url(#edg)"/>
<path d="M853 752.5 C850.5 749 850.5 743.5 853.5 740.5 C858 736.5 865 738 867 741 C864.5 741 861.5 743 861.5 746.5 C861.5 750.5 865.5 753 870 752.8 A12.2 12.2 0 0 1 853 752.5 Z" fill="#1A5BB8" opacity="0.75"/>
<path d="M870 752.8 C865.5 753 861.5 750.5 861.5 746.5 C861.5 743 864.5 741 867 741 C866 742 863.5 743 863.5 745.5 C863.5 748.5 867 750 871.5 749.2 Z" fill="#E8F1F6" opacity="0.9"/></svg>
<div class="a" style="left:859px;top:760px;width:6px;height:3px;border-radius:2px;background:#8A8A8A"></div>
<!-- teams -->
<svg style="left:892px;top:726px" width="34" height="32" viewBox="892 726 34 32"><rect x="910" y="737" width="8" height="15" rx="4" fill="#5B62D0"/><rect x="900.9" y="733.2" width="11.7" height="21.2" rx="5.85" fill="#7B83EB"/><rect x="893.9" y="738" width="12.1" height="12" rx="1.2" fill="#4B53BC"/><path d="M896.8 741 H903.2 M900 741 V747.8" stroke="#fff" stroke-width="1.8"/></svg>
<div class="a" style="left:907.1px;top:727.1px;width:15.8px;height:15.8px;border-radius:50%;background:#C42B1C"></div>
<div class="t" style="left:909px;top:729.5px;font-size:9.5px;color:#fff">9+</div>
<div class="a" style="left:903px;top:760px;width:6px;height:3px;border-radius:2px;background:#8A8A8A"></div>
<!-- notepad -->
<svg style="left:940px;top:731px" width="20" height="26" viewBox="0 0 20 26"><rect x="1" y="3" width="18" height="21" rx="1.5" fill="#3BB0D9"/><rect x="1" y="21" width="18" height="3.5" fill="#8A4B1E"/><path d="M4 9 H16 M4 12.5 H16 M4 16 H16" stroke="#14558A" stroke-width="1.6"/><path d="M4 1 V5 M8 1 V5 M12 1 V5 M16 1 V5" stroke="#1E5C8A" stroke-width="1.4"/></svg>
<div class="a" style="left:947px;top:760px;width:6px;height:3px;border-radius:2px;background:#8A8A8A"></div>
<!-- tray -->
<svg style="left:1110px;top:739px" width="12" height="9"><path d="M1 7.5 L6 2 L11 7.5" fill="none" stroke="#1F1F1F" stroke-width="1.4"/></svg>
<svg style="left:1139px;top:737px" width="18" height="13" viewBox="0 0 18 13"><path d="M4 12 A3.5 3.5 0 0 1 3.5 5.2 A5 5 0 0 1 12.5 3.8 A3.8 3.8 0 0 1 17.5 8.5 A3.5 3.5 0 0 1 14.5 12 Z" fill="#0F6CBD"/><path d="M2.5 12 A3 3 0 0 1 5 7 A4.5 4.5 0 0 1 13 8 A3 3 0 0 1 17.5 11 L17 12 Z" fill="#28A8EA"/></svg>
<div class="t" style="left:1174.4px;top:732px;font-size:10.6px;color:#1A1A1A">ENG</div>
<div class="t" style="left:1180px;top:748px;font-size:10.6px;color:#1A1A1A">IN</div>
<svg style="left:1215px;top:737px" width="18" height="13" viewBox="0 0 18 13"><path d="M1 5 A11 11 0 0 1 17 5" fill="none" stroke="#1F1F1F" stroke-width="1.3"/><path d="M3.5 7.5 A7.5 7.5 0 0 1 14.5 7.5" fill="none" stroke="#1F1F1F" stroke-width="1.3"/><path d="M6 10 A4 4 0 0 1 12 10" fill="none" stroke="#1F1F1F" stroke-width="1.3"/><circle cx="9" cy="12" r="1.3" fill="#1F1F1F"/></svg>
<svg style="left:1240px;top:737px" width="17" height="14" viewBox="0 0 17 14"><path d="M1 4.5 H4 L8 1 V13 L4 9.5 H1 Z" fill="none" stroke="#1F1F1F" stroke-width="1.2" stroke-linejoin="round"/><path d="M10.5 4.5 A3.5 3.5 0 0 1 10.5 9.5" fill="none" stroke="#1F1F1F" stroke-width="1.2"/><path d="M12.5 2.5 A6.5 6.5 0 0 1 12.5 11.5" fill="none" stroke="#1F1F1F" stroke-width="1.2"/><path d="M14.5 1 A8.5 8.5 0 0 1 14.5 13" fill="none" stroke="#1F1F1F" stroke-width="1.2"/></svg>
<svg style="left:1264px;top:739px" width="17" height="10" viewBox="0 0 17 10"><rect x="0.7" y="0.7" width="13.6" height="8.6" rx="1.8" fill="none" stroke="#1F1F1F" stroke-width="1.3"/><rect x="2.5" y="2.5" width="4.5" height="5" fill="#1F1F1F"/><rect x="15" y="3.3" width="1.6" height="3.4" fill="#1F1F1F"/></svg>
<div class="t" style="left:1296.3px;top:731px;font-size:11.9px;color:#1A1A1A">12:35 AM</div>
<div class="t" style="left:1298.2px;top:746px;font-size:12.3px;color:#1A1A1A">8/3/2025</div>
</body></html>
